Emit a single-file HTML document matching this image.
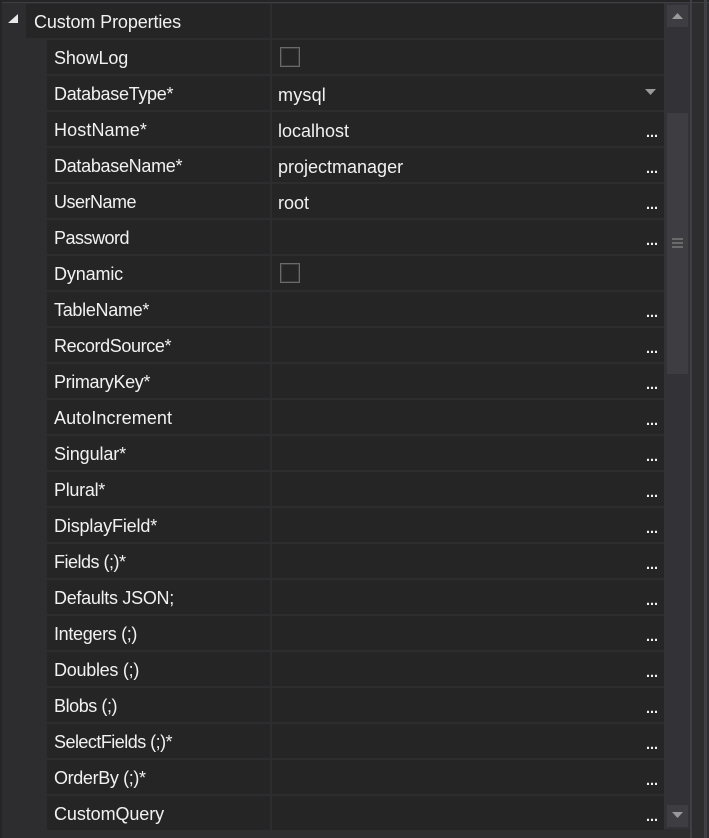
<!DOCTYPE html>
<html lang="en">
<head>
<meta charset="utf-8">
<title>Custom Properties</title>
<style>
html,body{margin:0;padding:0;width:709px;height:838px;overflow:hidden;background:#2d2d30}
body{position:relative;font-family:"Liberation Sans",sans-serif;font-size:18px;color:#f1f1f1}
.abs{position:absolute}
.row{position:absolute;left:47px;width:617px;height:34px;line-height:36px}
.k{position:absolute;left:0;top:0;width:223px;height:34px;background:#252526;padding-left:7px;box-sizing:border-box;white-space:nowrap}
.v{position:absolute;left:225px;top:0;width:392px;height:34px;background:#252526;padding-left:6px;box-sizing:border-box;white-space:nowrap;line-height:38px}
.d{position:absolute;left:599px;top:3px;width:14px;font-size:14.4px;font-weight:bold;line-height:36px;color:#f1f1f1}
.c{position:absolute;left:233px;top:7px;width:20px;height:20px;border:1px solid #6a6a6a;outline:0;box-sizing:border-box;box-shadow:inset 0 0 0 1px #3c3c3c}
</style>
</head>
<body>
<div class="abs" style="left:0;top:0;width:709px;height:2px;background:#252526"></div>
<div class="abs" style="left:0;top:2px;width:709px;height:1px;background:#3f3f46"></div>
<div class="abs" style="left:0;top:0;width:2px;height:838px;background:#252526"></div>
<div class="abs" style="left:690px;top:0;width:2px;height:838px;background:#3f3f46"></div>
<div class="abs" style="left:704px;top:0;width:3px;height:838px;background:#3f3f46"></div>

<svg class="abs" style="left:8px;top:14px" width="11" height="10"><path d="M10 0V9H0Z" fill="#e8e8e8"/></svg>

<div class="abs" style="left:26px;top:4px;width:244px;height:34px;background:#252526;line-height:36px;padding-left:8px;box-sizing:border-box;letter-spacing:-.12px">Custom Properties</div>
<div class="abs" style="left:272px;top:4px;width:392px;height:34px;background:#252526"></div>

<div class="row" style="top:40px"><div class="k" style="letter-spacing:-.14px">ShowLog</div><div class="v"></div><div class="c"></div></div>
<div class="row" style="top:76px"><div class="k" style="letter-spacing:-.3px">DatabaseType*</div><div class="v" style="letter-spacing:.2px">mysql</div><svg class="abs" style="left:598px;top:13px" width="12" height="8"><path d="M0 0H11L5.500 6Z" fill="#999"/></svg></div>
<div class="row" style="top:112px"><div class="k" style="letter-spacing:.11px">HostName*</div><div class="v">localhost</div><div class="d">...</div></div>
<div class="row" style="top:148px"><div class="k" style="letter-spacing:-.3px">DatabaseName*</div><div class="v">projectmanager</div><div class="d">...</div></div>
<div class="row" style="top:184px"><div class="k" style="letter-spacing:-.5px">UserName</div><div class="v">root</div><div class="d">...</div></div>
<div class="row" style="top:220px"><div class="k" style="letter-spacing:-.5px">Password</div><div class="v"></div><div class="d">...</div></div>
<div class="row" style="top:256px"><div class="k" style="letter-spacing:-.14px">Dynamic</div><div class="v"></div><div class="c"></div></div>
<div class="row" style="top:292px"><div class="k" style="letter-spacing:-.3px">TableName*</div><div class="v"></div><div class="d">...</div></div>
<div class="row" style="top:328px"><div class="k" style="letter-spacing:-.38px">RecordSource*</div><div class="v"></div><div class="d">...</div></div>
<div class="row" style="top:364px"><div class="k" style="letter-spacing:-.36px">PrimaryKey*</div><div class="v"></div><div class="d">...</div></div>
<div class="row" style="top:400px"><div class="k" style="letter-spacing:.08px">AutoIncrement</div><div class="v"></div><div class="d">...</div></div>
<div class="row" style="top:436px"><div class="k" style="letter-spacing:-.11px">Singular*</div><div class="v"></div><div class="d">...</div></div>
<div class="row" style="top:472px"><div class="k" style="letter-spacing:-.29px">Plural*</div><div class="v"></div><div class="d">...</div></div>
<div class="row" style="top:508px"><div class="k" style="letter-spacing:-.15px">DisplayField*</div><div class="v"></div><div class="d">...</div></div>
<div class="row" style="top:544px"><div class="k" style="letter-spacing:-.5px">Fields (;)*</div><div class="v"></div><div class="d">...</div></div>
<div class="row" style="top:580px"><div class="k" style="letter-spacing:-.29px">Defaults JSON;</div><div class="v"></div><div class="d">...</div></div>
<div class="row" style="top:616px"><div class="k" style="letter-spacing:-.33px">Integers (;)</div><div class="v"></div><div class="d">...</div></div>
<div class="row" style="top:652px"><div class="k" style="letter-spacing:-.27px">Doubles (;)</div><div class="v"></div><div class="d">...</div></div>
<div class="row" style="top:688px"><div class="k" style="letter-spacing:-.44px">Blobs (;)</div><div class="v"></div><div class="d">...</div></div>
<div class="row" style="top:724px"><div class="k" style="letter-spacing:-.53px">SelectFields (;)*</div><div class="v"></div><div class="d">...</div></div>
<div class="row" style="top:760px"><div class="k" style="letter-spacing:-.36px">OrderBy (;)*</div><div class="v"></div><div class="d">...</div></div>
<div class="row" style="top:796px"><div class="k" style="letter-spacing:-.09px">CustomQuery</div><div class="v"></div><div class="d">...</div></div>

<div class="abs" style="left:664px;top:3px;width:26px;height:826px;background:#333337"></div>
<div class="abs" style="left:667px;top:5px;width:21px;height:22px;background:#3e3e42"></div>
<svg class="abs" style="left:672px;top:12px" width="12" height="8"><path d="M0 7H11L5.500 1Z" fill="#999"/></svg>
<div class="abs" style="left:667px;top:113px;width:21px;height:261px;background:#3e3e42"></div>
<div class="abs" style="left:672px;top:238px;width:11px;height:2px;background:#6a6a6a"></div>
<div class="abs" style="left:672px;top:242px;width:11px;height:2px;background:#6a6a6a"></div>
<div class="abs" style="left:672px;top:246px;width:11px;height:2px;background:#6a6a6a"></div>
<div class="abs" style="left:667px;top:805px;width:21px;height:22px;background:#3e3e42"></div>
<svg class="abs" style="left:672px;top:812px" width="12" height="8"><path d="M0 0H11L5.500 6Z" fill="#999"/></svg>
</body>
</html>
